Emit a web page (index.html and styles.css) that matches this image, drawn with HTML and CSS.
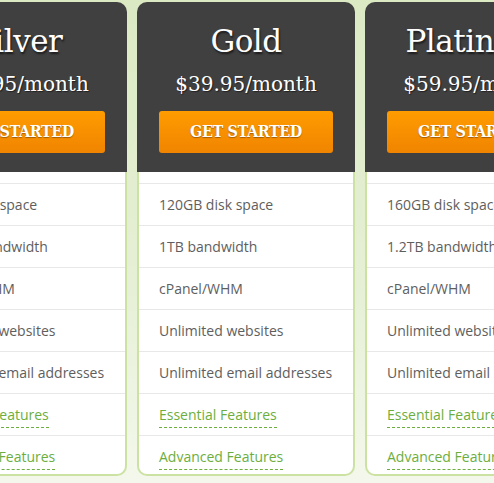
FILE: index.html
```html
<!DOCTYPE html>
<html lang="en">
<head>
<meta charset="utf-8">
<title>Pricing</title>
<link rel="stylesheet" href="styles.css">
</head>
<body>
<div class="plans">
  <div class="card">
    <div class="head">
      <h2 class="title">Silver</h2>
      <div class="price">$19.95/month</div>
      <a class="btn" href="#">GET STARTED</a>
    </div>
    <ul class="list">
      <li>80GB disk space</li>
      <li>500GB bandwidth</li>
      <li>cPanel/WHM</li>
      <li>Unlimited websites</li>
      <li>Unlimited email addresses</li>
      <li><a class="more" href="#">Essential Features</a></li>
      <li><a class="more" href="#">Advanced Features</a></li>
    </ul>
  </div>
  <div class="card">
    <div class="head">
      <h2 class="title">Gold</h2>
      <div class="price">$39.95/month</div>
      <a class="btn" href="#">GET STARTED</a>
    </div>
    <ul class="list">
      <li>120GB disk space</li>
      <li>1TB bandwidth</li>
      <li>cPanel/WHM</li>
      <li>Unlimited websites</li>
      <li>Unlimited email addresses</li>
      <li><a class="more" href="#">Essential Features</a></li>
      <li><a class="more" href="#">Advanced Features</a></li>
    </ul>
  </div>
  <div class="card">
    <div class="head">
      <h2 class="title">Platinum</h2>
      <div class="price">$59.95/month</div>
      <a class="btn" href="#">GET STARTED</a>
    </div>
    <ul class="list">
      <li>160GB disk space</li>
      <li>1.2TB bandwidth</li>
      <li>cPanel/WHM</li>
      <li>Unlimited websites</li>
      <li>Unlimited email addresses</li>
      <li><a class="more" href="#">Essential Features</a></li>
      <li><a class="more" href="#">Advanced Features</a></li>
    </ul>
  </div>
</div>
</body>
</html>
```
FILE: styles.css
```css
html, body {
  margin: 0;
  padding: 0;
  height: 100%;
}
body {
  background: linear-gradient(to bottom, #dbeac3 0%, #e6f0d6 60%, #f4f8ec 100%);
  overflow: hidden;
  font-family: "Open Sans", "DejaVu Sans", sans-serif;
}
.plans {
  display: flex;
  gap: 10px;
  margin-left: -91px;
  padding-top: 2px;
}
.card {
  flex: 0 0 218px;
  width: 218px;
  display: flex;
  flex-direction: column;
}
.head {
  background: #404040;
  border-radius: 10px 10px 0 0;
  padding: 19px 22px 19px;
  text-align: center;
  color: #fff;
}
.title {
  margin: 0;
  font-family: "DejaVu Serif", serif;
  font-weight: normal;
  font-size: 31px;
  line-height: 40px;
  white-space: nowrap;
  text-shadow: 1px 2px 2px rgba(0, 0, 0, 0.6);
  letter-spacing: -0.5px;
}
.price {
  margin-top: 8px;
  font-family: "DejaVu Serif", serif;
  font-size: 20px;
  line-height: 30px;
  white-space: nowrap;
  text-shadow: 1px 1px 1px rgba(0, 0, 0, 0.5);
}
.btn {
  display: block;
  margin-top: 12px;
  height: 42px;
  line-height: 42px;
  border-radius: 3px;
  background: linear-gradient(to bottom, #ff9c00 0%, #f08400 100%);
  color: #fff;
  text-decoration: none;
  font-family: "DejaVu Serif Condensed", "DejaVu Serif", serif;
  font-stretch: condensed;
  font-weight: bold;
  font-size: 16px;
  letter-spacing: -0.4px;
  white-space: nowrap;
  text-shadow: 0 1px 1px rgba(0, 0, 0, 0.35);
}
.list {
  list-style: none;
  margin: 0;
  padding: 11px 0 0;
  background: #fff;
  border: 2px solid #cbe2a3;
  border-top: none;
  border-radius: 0 0 10px 10px;
}
.list li {
  border-top: 1px solid #e8e8e8;
  height: 41px;
  line-height: 41px;
  padding-left: 20px;
  font-size: 14px;
  color: #5e5e5e;
  white-space: nowrap;
  overflow: hidden;
}
.list li:last-child {
  height: 38px;
}
.more {
  color: #6cae3e;
  text-decoration: none;
  border-bottom: 1px dashed #6cae3e;
  padding-bottom: 3px;
}
```
